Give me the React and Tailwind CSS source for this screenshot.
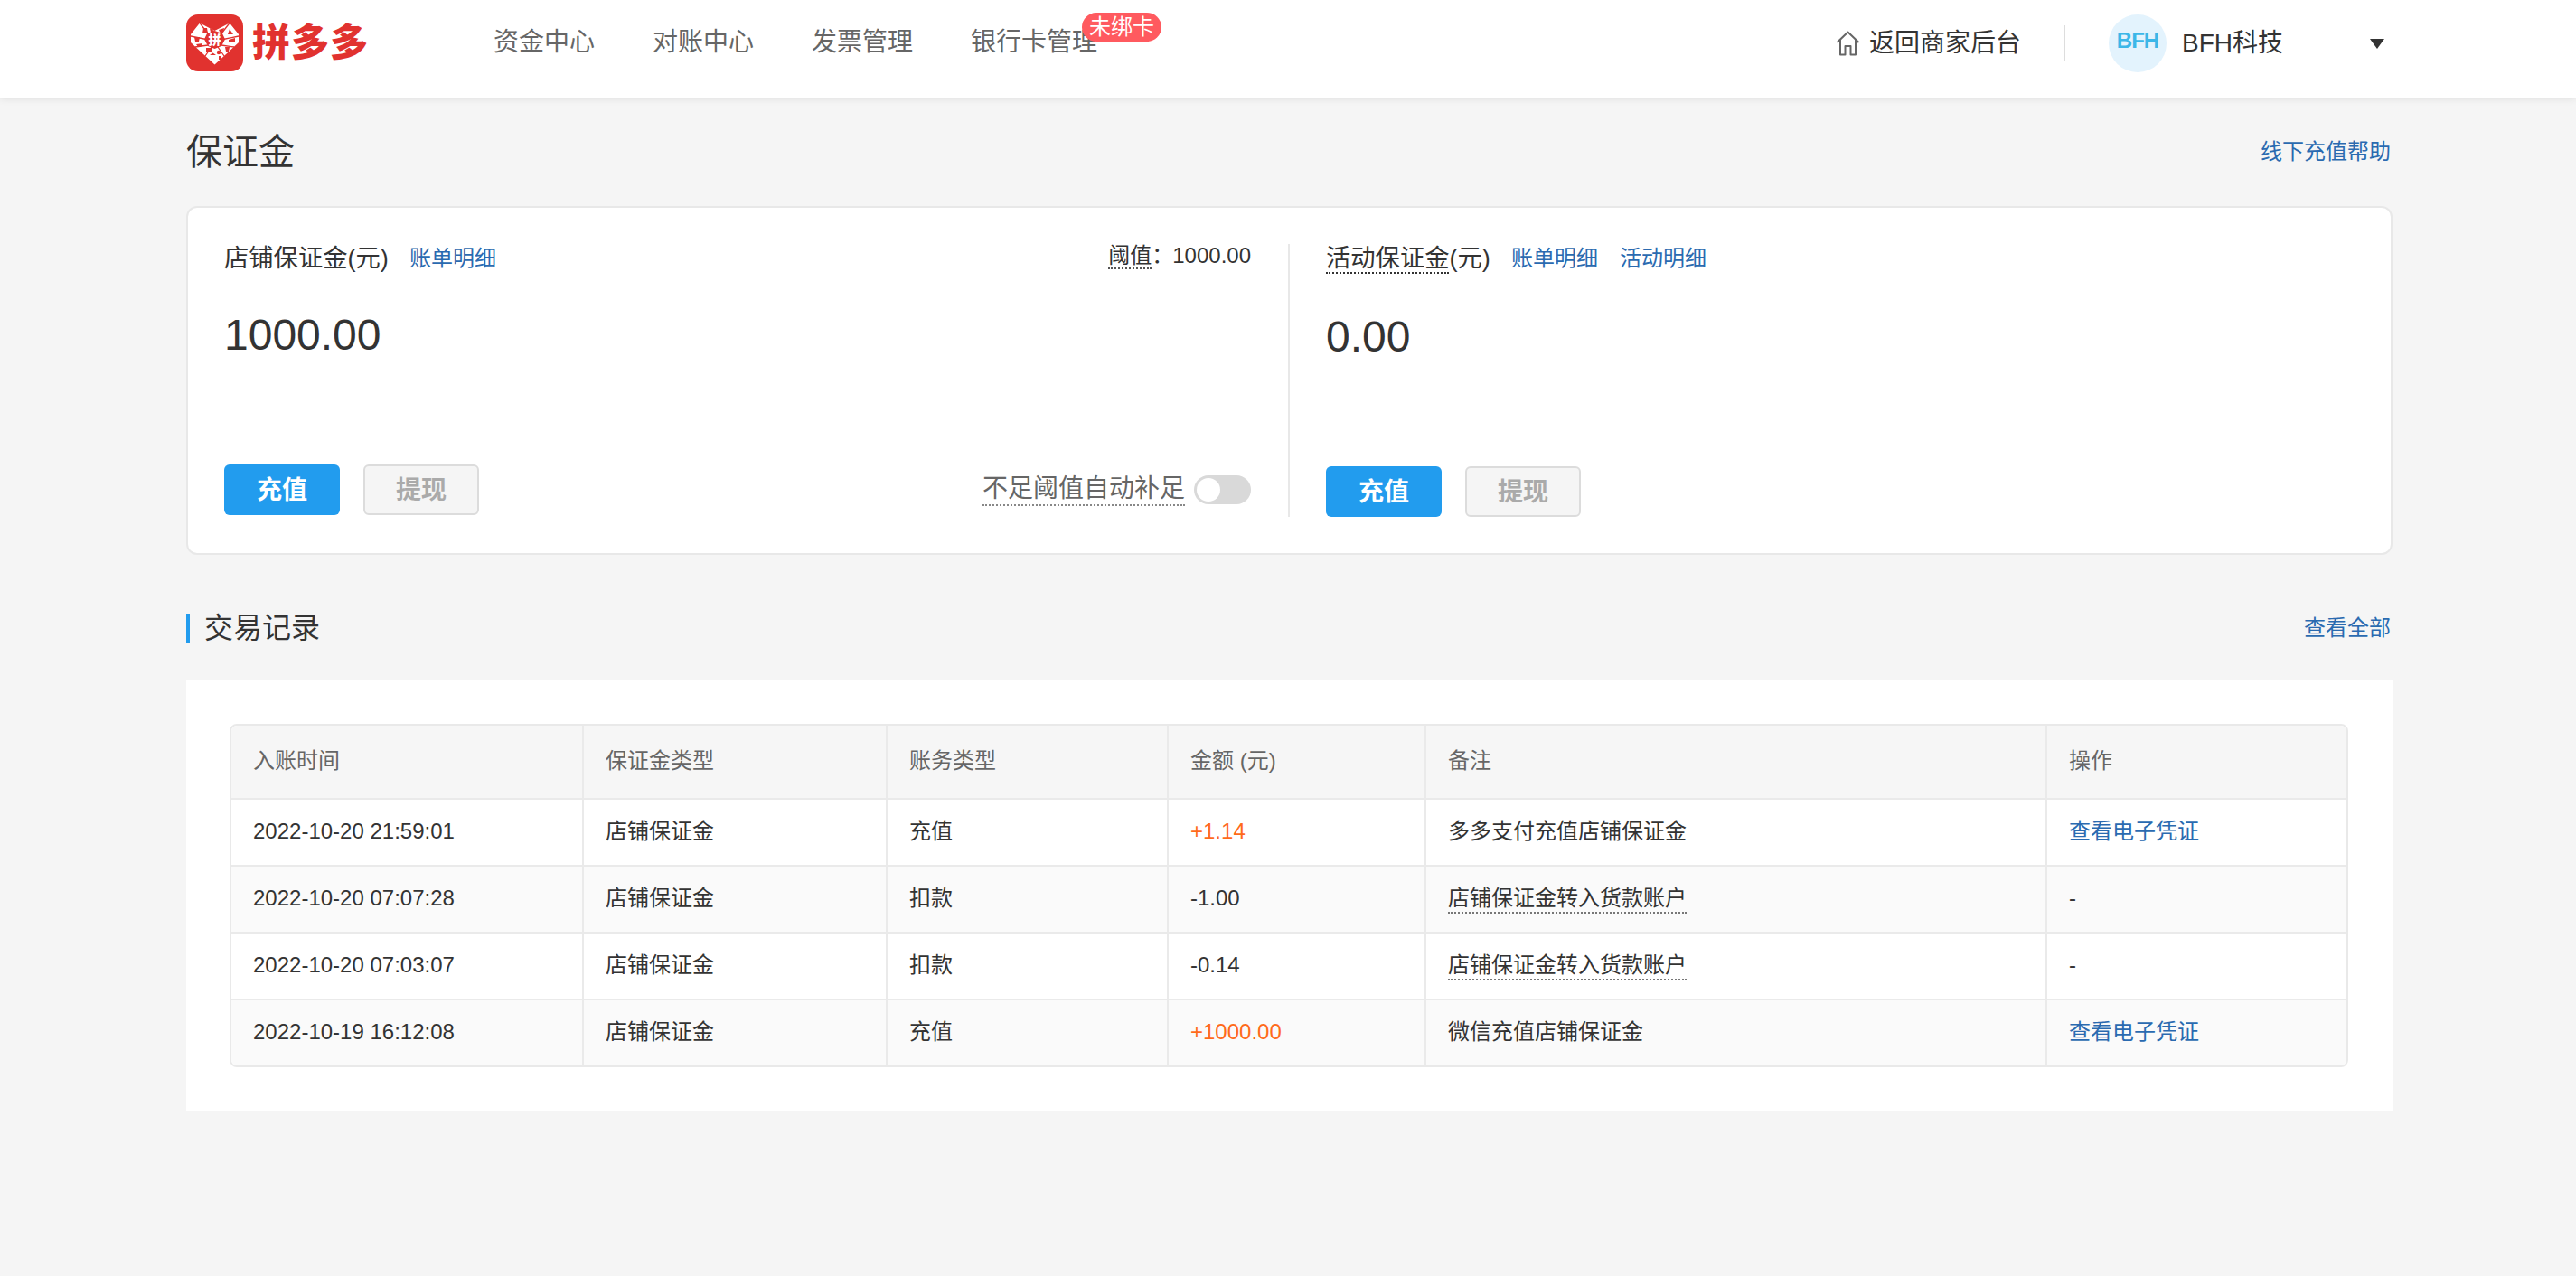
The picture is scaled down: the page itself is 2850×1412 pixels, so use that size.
import React from 'react';

const FONT = "font-['Liberation_Sans','Noto_Sans_CJK_SC',sans-serif]";

const navItems = ['资金中心', '对账中心', '发票管理'];

const rows = [
    { time: '2022-10-20 21:59:01', kind: '充值', amount: '+1.14', up: true, note: '多多支付充值店铺保证金', link: true },
    { time: '2022-10-20 07:07:28', kind: '扣款', amount: '-1.00', note: '店铺保证金转入货款账户', dotted: true },
    { time: '2022-10-20 07:03:07', kind: '扣款', amount: '-0.14', note: '店铺保证金转入货款账户', dotted: true },
    { time: '2022-10-19 16:12:08', kind: '充值', amount: '+1000.00', up: true, note: '微信充值店铺保证金', link: true },
];

const Logo = () => (
    <div className="flex items-center">
        <svg width="63" height="63" viewBox="0 0 63 63">
            <rect width="63" height="63" rx="13" fill="#e1322f" />
            <path d="M15 9.5 L31.5 18 L48 9.5 L58 22 L58 31 L31.5 55.5 L5 31 L5 22 Z" fill="#fff" />
            <g stroke="#e1322f" strokeWidth="1.3" fill="none">
                <path d="M15 9.5 L24 21 M48 9.5 L39 21 M5 24 L22 27.5 M58 24 L41 27.5 M10 36 L24 34 M53 36 L39 34 M21 46 L28 36 M42 46 L35 36" />
            </g>
            <path d="M31.5 18 L40 21 L43 27.5 L39 35 L31.5 38 L24 35 L20 27.5 L23 21 Z" fill="#e1322f" />
            <g fill="#e1322f">
                <path d="M19 15 L23 15 L24 21 L18 21 Z" />
                <path d="M26 15 L31 18 L30 21 L27 20 Z" />
                <path d="M36 17 L42 15 L41 20 L38 21 Z" />
                <path d="M48 16 L52 22 L46 22 Z" />
                <path d="M9 25 L15 25 L14 30 L10 30 Z" />
                <path d="M47 28 L54 26 L54 31 L47 30 Z" />
                <path d="M11 33 L18 32 L17 35 L13 36 Z" />
                <rect x="22" y="37" width="6" height="4.5" />
                <path d="M43 36 L48 36 L47 41 L44 41 Z" />
                <circle cx="36" cy="42" r="2.2" />
                <path d="M26 45 L33 45 L29.5 42.5 Z" />
                <rect x="36" y="46" width="3" height="4" />
            </g>
            <text x="31.5" y="32.5" textAnchor="middle" fontSize="14" fontWeight="900" fill="#fff" fontFamily="'Noto Sans CJK SC',sans-serif">拼</text>
        </svg>
        <span className="ml-[10px] text-[42px] leading-[63px] font-black text-[#e1322f] tracking-[1px]">拼多多</span>
    </div>
);

const HomeIcon = () => (
    <svg width="27" height="28" viewBox="0 0 27 28" fill="none" stroke="#666" strokeWidth="2" strokeLinejoin="round">
        <path d="M1.5 13 L13.5 1.5 L25.5 13 M5 10 V26.5 H10.5 V17 H16.5 V26.5 H22 V10" />
    </svg>
);

const Buttons = () => (
    <div className="flex gap-[26px]">
        <button className="w-[128px] h-[56px] pt-[2px] rounded-[6px] bg-[#229cee] text-white text-[28px] font-bold">充值</button>
        <button className="w-[128px] h-[56px] pt-[2px] rounded-[6px] bg-[#f5f5f5] border-2 border-[#dcdcdc] text-[#aaa] text-[28px] font-bold">提现</button>
    </div>
);

const Link = ({ children, className = '' }) => (
    <a className={`text-[24px] leading-[28px] text-[#2a6ab0] ${className}`}>{children}</a>
);

const Balance = () => (
    <div className="flex bg-white border-2 border-[#e8e8e8] rounded-[12px] h-[386px] pl-[40px] pt-[40px]">
        <div className="w-[1136px] h-[302px] pb-[2px] flex flex-col">
            <div className="flex items-start justify-between h-[32px]">
                <div className="flex items-center h-[32px]">
                    <span className="text-[27.3px] text-[#333] leading-[28px]">店铺保证金(元)</span>
                    <Link className="ml-[23px]">账单明细</Link>
                </div>
                <div className="flex text-[24px] text-[#333] leading-[26px]">
                    <span className="border-b-2 border-dotted border-[#555]">阈值</span>
                    <span>：</span>
                    <span className="-ml-[1px]">1000.00</span>
                </div>
            </div>
            <div className="mt-[41px] text-[48px] leading-[56px] text-[#333]">1000.00</div>
            <div className="mt-auto flex items-center justify-between">
                <Buttons />
                <div className="flex items-center gap-[10px]">
                    <span className="text-[28px] leading-[34px] text-[#666] border-b-2 border-dotted border-[#888]">不足阈值自动补足</span>
                    <div className="w-[63px] h-[32px] rounded-full bg-[#d9d9d9] p-[3px]">
                        <div className="w-[26px] h-[26px] rounded-full bg-white" />
                    </div>
                </div>
            </div>
        </div>
        <div className="ml-[41px] w-[2px] h-[302px] bg-[#e8e8e8]" />
        <div className="ml-[40px] h-[302px] flex flex-col">
            <div className="flex items-center h-[32px]">
                <span className="text-[27.3px] text-[#333] leading-[28px]">
                    <span className="border-b-2 border-dotted border-[#333]">活动保证金</span>(元)
                </span>
                <Link className="ml-[23px]">账单明细</Link>
                <Link className="ml-[24px]">活动明细</Link>
            </div>
            <div className="mt-[43px] text-[48px] leading-[56px] text-[#333]">0.00</div>
            <div className="mt-auto"><Buttons /></div>
        </div>
    </div>
);

const colWidths = ['w-[388px]', 'w-[336px]', 'w-[311px]', 'w-[285px]', 'w-[687px]', 'w-[333px]'];
const heads = ['入账时间', '保证金类型', '账务类型', '金额 (元)', '备注', '操作'];

const RecordTable = () => (
    <div className="border-2 border-[#e9e9e9] rounded-[8px] overflow-hidden">
        <table className="w-full table-fixed border-separate border-spacing-0 text-[24px] text-[#333]">
            <colgroup>
                {colWidths.map((w, i) => <col key={i} className={w} />)}
            </colgroup>
            <thead>
                <tr className="bg-[#f6f6f6]">
                    {heads.map((h, i) => (
                        <th key={h} className={`h-[80px] pl-[24px] pb-[2px] text-left font-normal text-[#666] ${i > 0 ? 'border-l-2 border-[#eaeaea]' : ''}`}>{h}</th>
                    ))}
                </tr>
            </thead>
            <tbody>
                {rows.map((r, idx) => (
                    <tr key={r.time} className={idx % 2 ? 'bg-[#fafafa]' : 'bg-white'}>
                        <td className="h-[74px] pl-[24px] pb-[2px] border-t-2 border-[#eaeaea]">{r.time}</td>
                        <td className="pl-[24px] pb-[2px] border-t-2 border-l-2 border-[#eaeaea]">店铺保证金</td>
                        <td className="pl-[24px] pb-[2px] border-t-2 border-l-2 border-[#eaeaea]">{r.kind}</td>
                        <td className={`pl-[24px] pb-[2px] border-t-2 border-l-2 border-[#eaeaea] ${r.up ? 'text-[#ff6a1a]' : ''}`}>{r.amount}</td>
                        <td className="pl-[24px] pb-[2px] border-t-2 border-l-2 border-[#eaeaea]">
                            {r.dotted
                                ? <span className="inline-block leading-[30px] border-b-2 border-dotted border-[#777]">{r.note}</span>
                                : r.note}
                        </td>
                        <td className="pl-[24px] pb-[2px] border-t-2 border-l-2 border-[#eaeaea]">
                            {r.link ? <a className="text-[#2a6ab0]">查看电子凭证</a> : '-'}
                        </td>
                    </tr>
                ))}
            </tbody>
        </table>
    </div>
);

export default function App() {
    return (
        <div className={`min-h-[1412px] bg-[#f5f5f5] ${FONT}`}>
            <header className="h-[108px] bg-white shadow-[0_2px_8px_rgba(0,0,0,0.08)]">
                <div className="w-[2441px] ml-[206px] h-full flex items-start">
                    <div className="pt-[16px] w-[340px]"><Logo /></div>
                    <nav className="flex gap-[64px] pt-[32px] text-[28px] leading-[30px] text-[#666]">
                        {navItems.map(n => <span key={n}>{n}</span>)}
                        <span className="relative">
                            银行卡管理
                            <span className="absolute left-[123px] top-[-18px] w-[88px] h-[32px] rounded-full bg-[#ff5a5f] text-white text-[24px] leading-[32px] text-center">未绑卡</span>
                        </span>
                    </nav>
                    <div className="ml-auto flex items-center h-[64px] mt-[16px]">
                        <HomeIcon />
                        <span className="ml-[10px] text-[28px] text-[#333]">返回商家后台</span>
                        <div className="ml-[47px] w-[2px] h-[40px] bg-[#ddd]" />
                        <div className="ml-[48px] w-[64px] h-[64px] rounded-full bg-[#e3f3fd] flex items-center justify-center text-[#3cb7e8] text-[24px] tracking-[-1px] font-bold pb-[6px]">BFH</div>
                        <span className="ml-[17px] text-[28px] text-[#333] w-[208px]">BFH科技</span>
                        <div className="mr-[9px] w-0 h-0 border-x-[8px] border-x-transparent border-t-[11px] border-t-[#333]" />
                    </div>
                </div>
            </header>
            <main className="w-[2441px] ml-[206px]">
                <div className="flex items-center justify-between h-[60px] mt-[30px] pr-[2px]">
                    <h1 className="text-[40px] text-[#333] font-normal">保证金</h1>
                    <Link>线下充值帮助</Link>
                </div>
                <div className="mt-[30px]"><Balance /></div>
                <div className="flex items-center justify-between mt-[65px] h-[32px] pr-[2px]">
                    <h2 className="border-l-[4px] border-[#229cee] pl-[16px] text-[32px] leading-[32px] text-[#333] font-normal">交易记录</h2>
                    <Link>查看全部</Link>
                </div>
                <section className="mt-[41px] bg-white pl-[48px] pr-[49px] pt-[49px] h-[477px]">
                    <RecordTable />
                </section>
            </main>
        </div>
    );
}
